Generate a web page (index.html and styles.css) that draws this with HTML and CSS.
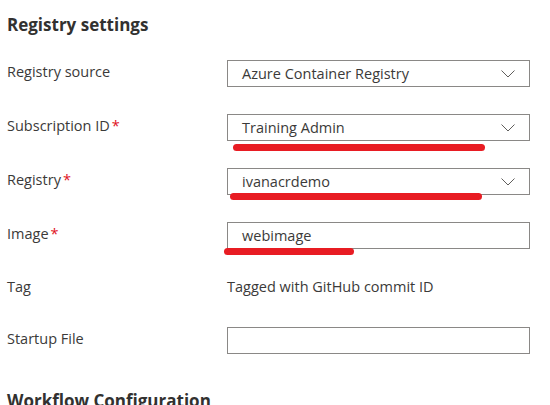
FILE: index.html
```html
<!DOCTYPE html>
<html>
<head>
<meta charset="utf-8">
<link rel="stylesheet" href="styles.css">
</head>
<body>
<div class="page">
  <h2 class="heading">Registry settings</h2>
  <div class="form">
    <div class="row">
      <div class="label">Registry source</div>
      <div class="field select"><span>Azure Container Registry</span><svg class="chev" width="14" height="8" viewBox="0 0 14 8"><path d="M0.5 0.5 L7 7 L13.5 0.5" fill="none" stroke="#605e5c" stroke-width="1"/></svg></div>
    </div>
    <div class="row">
      <div class="label">Subscription ID<span class="req">*</span></div>
      <div class="field select"><span>Training Admin</span><svg class="chev" width="14" height="8" viewBox="0 0 14 8"><path d="M0.5 0.5 L7 7 L13.5 0.5" fill="none" stroke="#605e5c" stroke-width="1"/></svg>
        <div class="mark mark1"></div></div>
    </div>
    <div class="row">
      <div class="label">Registry<span class="req">*</span></div>
      <div class="field select"><span>ivanacrdemo</span><svg class="chev" width="14" height="8" viewBox="0 0 14 8"><path d="M0.5 0.5 L7 7 L13.5 0.5" fill="none" stroke="#605e5c" stroke-width="1"/></svg>
        <div class="mark mark2"></div></div>
    </div>
    <div class="row">
      <div class="label">Image<span class="req">*</span></div>
      <div class="field"><span>webimage</span>
        <div class="mark mark3"></div></div>
    </div>
    <div class="row row-text">
      <div class="label">Tag</div>
      <div class="value">Tagged with GitHub commit ID</div>
    </div>
    <div class="row">
      <div class="label">Startup File</div>
      <div class="field"></div>
    </div>
  </div>
  <h2 class="heading heading2">Workflow Configuration</h2>
</div>
</body>
</html>
```
FILE: styles.css
```css
html, body {
  margin: 0;
  padding: 0;
  background: #ffffff;
}
body {
  font-family: "Open Sans", "Noto Sans", sans-serif;
  font-size: 14.5px;
  color: #3b3a39;
  overflow: hidden;
  height: 405px;
}
.page {
  padding: 0 20px 0 7px;
}
.heading {
  margin: 0;
  padding-top: 14px;
  font-size: 17px;
  font-weight: 700;
  line-height: 22px;
  color: #323130;
}
.form {
  margin-top: 24px;
  display: flex;
  flex-direction: column;
  gap: 27px;
}
.row {
  display: grid;
  grid-template-columns: 220px 303px;
  align-items: center;
  height: 27px;
}
.row-text {
  height: 24px;
}
.label {
  white-space: nowrap;
  line-height: 18px;
  margin-top: -3px;
}
.req {
  color: #e0111d;
  margin-left: 2px;
}
.field {
  position: relative;
  box-sizing: border-box;
  height: 27px;
  border: 1px solid #8a8886;
  display: flex;
  align-items: center;
  padding: 0 14px 0 14px;
  justify-content: space-between;
}
.chev {
  display: block;
}
.value {
  line-height: 18px;
  margin-top: -3px;
}
.mark {
  position: absolute;
  height: 7px;
  border-radius: 4px;
  background: #e81c23;
}
.mark1 { left: 5px; top: 29px; width: 252px; }
.mark2 { left: 2px; top: 24px; width: 252px; }
.mark3 { left: -4px; top: 25px; width: 130px; }
.heading2 {
  padding-top: 36px;
}
```
